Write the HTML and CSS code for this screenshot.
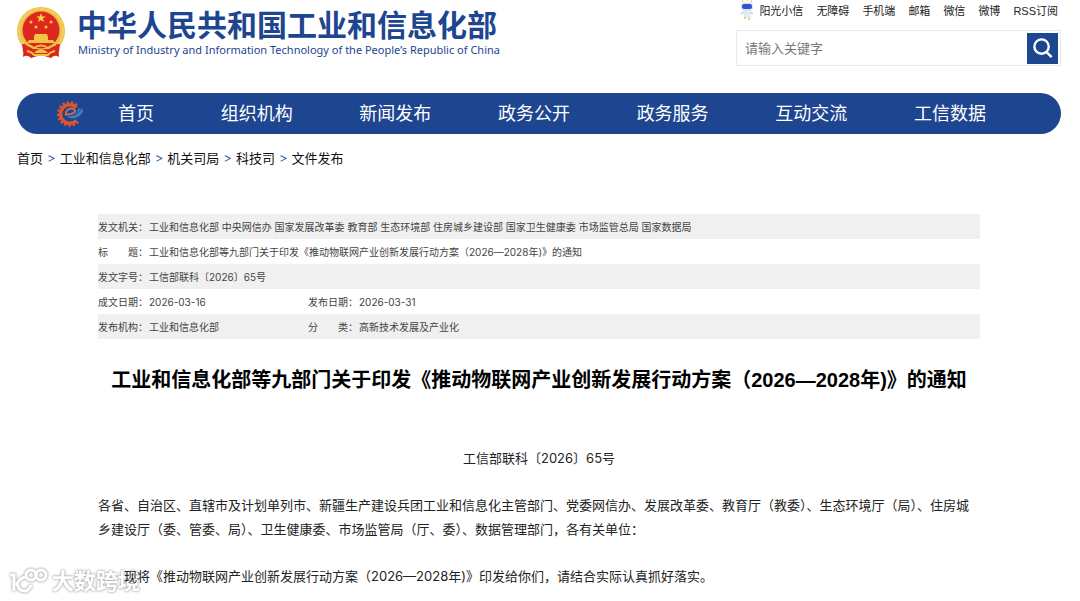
FILE: index.html
```html
<!DOCTYPE html>
<html lang="zh-CN">
<head>
    <meta charset="UTF-8">
    <meta name="viewport" content="width=device-width, initial-scale=1.0">
    <title>工业和信息化部等九部门关于印发《推动物联网产业创新发展行动方案（2026—2028年)》的通知</title>
    <link rel="stylesheet" href="styles.css">
</head>
<body>

    <!-- Header: logo, quick links and search -->
    <header class="header">
        <a class="logo" href="#">
            <svg class="emblem" viewBox="0 0 48 52" aria-hidden="true">
                <path d="M7 36 L6 50 Q10 47 14 51 L24 48 L34 51 Q38 47 42 50 L41 36 Z" fill="#d9261c"/>
                <circle cx="24" cy="24" r="24" fill="#ecc04a"/>
                <circle cx="24" cy="24" r="22" fill="none" stroke="#f3d163" stroke-width="2" stroke-dasharray="5 1"/>
                <circle cx="24" cy="23" r="18.500" fill="#dc281e"/>
                <path d="M24 6l1.200 3.400h3.600l-2.900 2.200 1.100 3.500-3-2.100-3 2.100 1.100-3.500-2.900-2.200h3.600z" fill="#f8d44c"/>
                <g fill="#f3c444">
                    <circle cx="14" cy="15" r="1.500"/>
                    <circle cx="34" cy="15" r="1.500"/>
                    <circle cx="19" cy="20" r="1.500"/>
                    <circle cx="29" cy="20" r="1.500"/>
                    <path d="M18 27h12l1 3H17z"/>
                    <path d="M17 30h14v3h5l2 3H10l2-3h5z"/>
                </g>
                <path d="M5 37 Q13 37 16 42 L32 42 Q35 37 43 37 L42 45 Q33 44 30 49 L18 49 Q15 44 6 45 Z" fill="#dc281e"/>
                <path d="M9 37 L17 41 Q24 36 31 41 L39 37" fill="none" stroke="#f0c040" stroke-width="2"/>
                <path d="M17 46 Q24 38 31 46 Z" fill="#efc24a"/>
                <path d="M10 44 Q15 45 17 48 H31 Q33 45 38 44" fill="none" stroke="#ecc04a" stroke-width="2"/>
            </svg>
            <span class="logo-text">
                <span class="logo-cn">中华人民共和国工业和信息化部</span>
                <span class="logo-en" lang="en">Ministry of Industry and Information Technology of the People’s Republic of China</span>
            </span>
        </a>

        <div class="tools">
            <div class="quick-links">
                <a class="mascot-link" href="#">
                    <svg class="mascot" viewBox="0 0 14 21" aria-hidden="true">
                        <path d="M3 2L2 0M7 1V0M11 2l1-2" stroke="#f2c14e"/>
                        <rect x="1" y="2" width="12" height="9" rx="4" fill="#dbe6fa"/>
                        <rect x="2" y="4" width="10" height="5" rx="2" fill="#3453c4"/>
                        <path d="M4 11h6l1 7H4z" fill="#e3ebf8"/>
                        <path d="M4 12l-3 2M10 12l3 2" stroke="#cbd8f0" stroke-width="2"/>
                        <path d="M5 17v2M9 18v2" stroke="#eccb7a" stroke-width="2"/>
                    </svg>
                    阳光小信
                </a>
                <a href="#">无障碍</a>
                <a href="#">手机端</a>
                <a href="#">邮箱</a>
                <a href="#">微信</a>
                <a href="#">微博</a>
                <a href="#">RSS订阅</a>
            </div>
            <form class="search">
                <input type="text" placeholder="请输入关键字" aria-label="请输入关键字">
                <button type="button" aria-label="搜索">
                    <svg viewBox="0 0 24 24" aria-hidden="true">
                        <circle cx="11" cy="10" r="7.500"/>
                        <path d="M16 15.500l5.500 5.500"/>
                    </svg>
                </button>
            </form>
        </div>
    </header>

    <!-- Main navigation -->
    <nav class="nav">
        <svg class="nav-icon" viewBox="0 0 27 27" aria-hidden="true">
            <path d="M21 21.500A11.300 11.300 0 1 1 20 5.500" fill="none" stroke="#d9542f" stroke-width="3" stroke-dasharray="2.200 2"/>
            <path d="M19.500 20.500A9.300 9.300 0 1 1 19.500 7.500" fill="none" stroke="#d9542f" stroke-width="3.500"/>
            <path d="M8.500 15.500C8.500 10 12 8.500 14.500 8.500C18 8.500 19 11.500 16.500 13C14.500 14.500 12 14.500 9.500 14.500" fill="none" stroke="#dc6a45" stroke-width="1.800"/>
            <path d="M9.500 15.500C14 16.500 20 14.500 21.500 8.500Q27 8 26 11C24.500 17 14 21.500 9.500 15.500Z" fill="#3b7fc4"/>
            <path d="M12 15.500C17 16 22 13 24 9.500" fill="none" stroke="#1d4590"/>
        </svg>
        <ul>
            <li><a href="#">首页</a></li>
            <li><a href="#">组织机构</a></li>
            <li><a href="#">新闻发布</a></li>
            <li><a href="#">政务公开</a></li>
            <li><a href="#">政务服务</a></li>
            <li><a href="#">互动交流</a></li>
            <li><a href="#">工信数据</a></li>
        </ul>
    </nav>

    <!-- Breadcrumb -->
    <div class="breadcrumb">
        <a href="#">首页</a><span>&gt;</span><a href="#">工业和信息化部</a><span>&gt;</span><a href="#">机关司局</a><span>&gt;</span><a href="#">科技司</a><span>&gt;</span><a href="#">文件发布</a>
    </div>

    <main class="article">
        <!-- Document details -->
        <table class="info">
            <tr>
                <th scope="row">发文机关：</th>
                <td colspan="3">工业和信息化部 中央网信办 国家发展改革委 教育部 生态环境部 住房城乡建设部 国家卫生健康委 市场监管总局 国家数据局</td>
            </tr>
            <tr>
                <th scope="row">标　　题：</th>
                <td colspan="3">工业和信息化部等九部门关于印发《推动物联网产业创新发展行动方案（2026—2028年)》的通知</td>
            </tr>
            <tr>
                <th scope="row">发文字号：</th>
                <td colspan="3">工信部联科〔2026〕65号</td>
            </tr>
            <tr>
                <th scope="row">成文日期：</th>
                <td class="short">2026-03-16</td>
                <th scope="row">发布日期：</th>
                <td>2026-03-31</td>
            </tr>
            <tr>
                <th scope="row">发布机构：</th>
                <td class="short">工业和信息化部</td>
                <th scope="row">分　　类：</th>
                <td>高新技术发展及产业化</td>
            </tr>
        </table>

        <h1>工业和信息化部等九部门关于印发《推动物联网产业创新发展行动方案（2026—2028年)》的通知</h1>

        <div class="content">
            <p class="doc-number">工信部联科〔2026〕65号</p>
            <p>各省、自治区、直辖市及计划单列市、新疆生产建设兵团工业和信息化主管部门、党委网信办、发展改革委、教育厅（教委）、生态环境厅（局）、住房城乡建设厅（委、管委、局）、卫生健康委、市场监管局（厅、委）、数据管理部门，各有关单位：</p>
            <p class="indent">现将《推动物联网产业创新发展行动方案（2026—2028年)》印发给你们，请结合实际认真抓好落实。</p>
        </div>
    </main>

    <!-- Watermark behind the text -->
    <div class="watermark">
        <svg viewBox="0 0 40 28" aria-hidden="true">
            <path d="M2 8h4v16M17 10Q11 12 9 17Q11 25 18 24Q22 22 23 18" fill="none" stroke="#fff" stroke-width="3"/>
            <circle cx="23" cy="8" r="5" fill="none" stroke="#fff" stroke-width="3"/>
            <circle cx="33" cy="8" r="5" fill="none" stroke="#fff" stroke-width="3"/>
        </svg>
        <span>大数跨境</span>
    </div>

</body>
</html>
```

FILE: styles.css
```css
* {
    box-sizing: border-box;
}

/* Body styling */
body {
    font-family: Inter, "Noto Sans CJK SC", sans-serif;
    font-size: 13px;
    margin: 0;
    padding: 0 19px 0 17px;
    background: #fff;
    color: #222;
    position: relative;
    min-height: 100vh;
}
a {
    color: inherit;
    text-decoration: none;
}

/* Header */
.header {
    display: flex;
    justify-content: space-between;
    height: 93px;
}
.logo {
    display: flex;
    align-items: flex-start;
    gap: 12px;
    padding-top: 7px;
    color: #1d4590;
}
.emblem {
    width: 48px;
    height: 52px;
}
.logo-text {
    display: flex;
    flex-direction: column;
}
.logo-cn {
    font-size: 30px;
    font-weight: bold;
    line-height: 36px;
    white-space: nowrap;
}
.logo-en {
    font-family: "Noto Sans", sans-serif;
    font-size: 11px;
    line-height: 14px;
    padding-left: 1px;
    white-space: nowrap;
}

/* Quick links */
.tools {
    width: 325px;
}
.quick-links {
    display: flex;
    justify-content: flex-end;
    gap: 13px;
    height: 22px;
    line-height: 22px;
    font-family: "Liberation Sans", "Noto Sans CJK SC", sans-serif;
    font-size: 11px;
    padding-right: 3px;
    white-space: nowrap;
}
.mascot-link {
    display: flex;
    gap: 5px;
}
.mascot {
    width: 14px;
    height: 21px;
}

/* Search box */
.search {
    display: flex;
    align-items: center;
    height: 36px;
    margin-top: 8px;
    padding: 0 2px 0 0;
    border: 1px solid #e8e8ea;
}
.search input {
    flex: 1;
    min-width: 0;
    border: none;
    outline: none;
    padding: 0 8px;
    font: inherit;
}
.search input::placeholder {
    color: #777;
}
.search button {
    width: 31px;
    height: 31px;
    border: none;
    padding: 4px;
    background: #1d4590;
}
.search svg {
    display: block;
    fill: none;
    stroke: #fff;
    stroke-width: 2.5;
}

/* Main navigation */
.nav {
    display: flex;
    align-items: center;
    height: 41px;
    padding: 0 75px 0 40px;
    border-radius: 21px;
    background: #1d4590;
    color: #fff;
}
.nav-icon {
    width: 27px;
    height: 27px;
}
.nav ul {
    flex: 1;
    display: flex;
    justify-content: space-between;
    list-style: none;
    margin: 0 0 0 34px;
    padding: 0;
    font-size: 18px;
    line-height: 40px;
}

/* Breadcrumb */
.breadcrumb {
    margin-top: 14px;
    line-height: 20px;
    color: #111;
}
.breadcrumb span {
    margin: 0 4px;
    color: #3a62b0;
}

/* Article */
.article {
    padding: 46px 81px 0;
}

/* Document details */
.info {
    width: 100%;
    border-collapse: collapse;
    font-size: 10px;
    color: #444;
}
.info tr:nth-child(odd) {
    background: #f0f0f0;
}
.info th,
.info td {
    height: 25px;
    padding: 0;
    text-align: left;
    font-weight: normal;
}
.info th {
    width: 51px;
}
.info .short {
    width: 159px;
}

h1 {
    margin: 25px 0 0;
    font-family: "Liberation Sans", "Noto Sans CJK SC", sans-serif;
    font-size: 20px;
    line-height: 32px;
    text-align: center;
    white-space: nowrap;
    color: #000;
}

.content {
    margin-top: 50px;
    line-height: 24px;
}
.content p {
    margin: 0 0 23px;
}
.content p:last-child {
    margin-bottom: 0;
}
.content .doc-number {
    text-align: center;
}
.content .indent {
    text-indent: 2em;
}

/* Watermark */
.watermark {
    position: absolute;
    z-index: -1;
    left: 8px;
    bottom: 5px;
    display: flex;
    align-items: center;
    gap: 4px;
    color: #fff;
    font-size: 22px;
    font-weight: bold;
    line-height: 30px;
    filter: drop-shadow(0 0 1px #aaa) drop-shadow(0 0 1px #ccc);
}
.watermark svg {
    width: 40px;
    height: 28px;
}
```
